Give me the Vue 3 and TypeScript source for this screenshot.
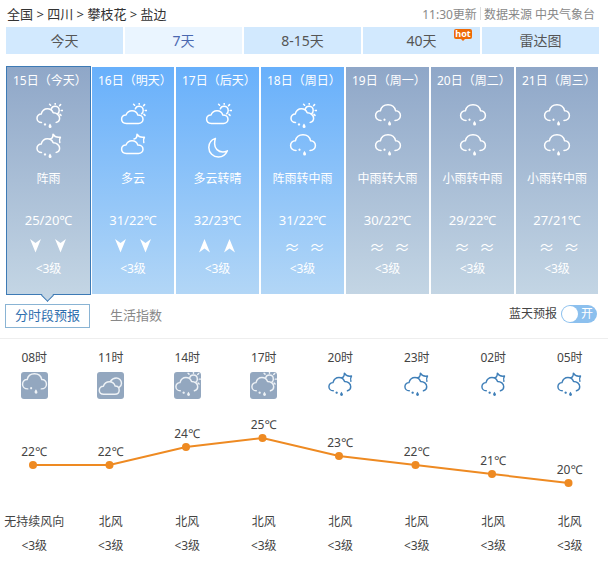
<script setup lang="ts">
import { computed } from 'vue'

type IconName = 'rain' | 'showerDay' | 'showerNight' | 'cloudDay' | 'cloudNight' | 'moon' | 'overcast'
type Wind = 'down' | 'up' | 'wave'

type DayItem = {
  date: string
  icons: [IconName, IconName]
  text: string
  temp: string
  wind: Wind
  rainy: boolean
}

type HourItem = {
  time: string
  icon: IconName
  boxed: boolean
  temp: number
  wind: string
}

const openCloud = 'M6.5 19.5C3.8 19.5 2 17.5 2 15.2C2 12.8 3.9 11 6.2 11C7.2 7.6 9.6 5.8 12.4 5.8C15 5.8 17.2 7.2 18.2 9.8C21.6 9.8 24.6 12 24.6 15.2C24.6 17.2 23.4 18.8 21.2 19.4'
const closedCloud = 'M7.4 20.4C4.4 20.4 2.6 18.4 2.6 16C2.6 13.6 4.6 11.8 7 12C8 9.4 10.2 7.8 13 7.8C15.8 7.8 18 9.4 18.8 12C21.6 12 24 13.8 24 16.2C24 18.6 22 20.4 19.4 20.4Z'
const sun = 'M16.4 5.8C16.8 4.2 18.4 3.2 20 3.2C22.4 3.2 24.2 5 24.2 7.4C24.2 8.8 23.6 10 22.6 10.8M20.2 1.2V0M24.6 2.6L25.6 1.6M26.2 7.4H27.8M25 11.4L26 12.4M15.6 2.2L14.6 1.2'
const moonHook = 'M15 6C17 5.8 18 4 18 1.2C19.2 3.4 21.6 4.8 25.4 4.2C24.4 5.6 24.2 7.4 24.8 9.6'
const drops = 'M10 20.2a1.2 1.2 0 1 0 .01 0ZM15 20.4C14.2 21.6 13.6 22.4 13.6 23.4a1.5 1.5 0 0 0 3 0C16.4 22.4 15.8 21.6 15 20.4Z'

const icons: Record<IconName, { line: string; fill: string }> = {
  rain: {
    line: 'M7 17.5C3.6 17.5 1.6 15.2 1.6 12.6C1.6 9.8 3.8 7.6 6.4 7.8C7.2 4.2 10.2 1.8 14 1.8C17.8 1.8 20.8 4.2 21.6 7.8C24.2 7.6 26.4 9.8 26.4 12.6C26.4 15.2 24.4 17.5 21 17.5',
    fill: 'M10.5 15.6a1.1 1.1 0 1 0 .01 0ZM15.5 18C14.7 19.2 14.1 20 14.1 21a1.5 1.5 0 0 0 3 0C16.9 20 16.3 19.2 15.5 18Z',
  },
  showerDay: { line: `${openCloud}${sun}`, fill: drops },
  showerNight: { line: `${openCloud}${moonHook}`, fill: drops },
  cloudDay: { line: `${closedCloud}${sun}`, fill: '' },
  cloudNight: { line: `${closedCloud}${moonHook}`, fill: '' },
  moon: { line: 'M11.4 5.4C7.4 6.8 4.8 10.4 4.8 14.4C4.8 19.8 9.2 24 14.4 24C18.4 24 21.8 21.6 23.4 17.8C21.8 18.6 20.4 19 18.8 19C14.2 19 10.6 15.4 10.6 10.8C10.6 8.8 10.8 7 11.4 5.4Z', fill: '' },
  overcast: {
    line: 'M7 23C4 23 2.4 21 2.4 18.8C2.4 16.4 4.4 14.6 6.6 14.8C7.6 12 10 10.2 12.8 10.2C15.8 10.2 18 12 18.8 14.6C21.2 14.6 23 16.4 23 18.8C23 21.2 21.2 23 18.6 23ZM14 9.6C15.4 7.4 17.6 6.2 20 6.2C23 6.2 25.4 8.6 25.4 11.6C25.4 13.4 24.6 15 23 16',
    fill: '',
  },
}

const days: DayItem[] = [
  { date: '15日（今天）', icons: ['showerDay', 'showerNight'], text: '阵雨', temp: '25/20℃', wind: 'down', rainy: true },
  { date: '16日（明天）', icons: ['cloudDay', 'cloudNight'], text: '多云', temp: '31/22℃', wind: 'down', rainy: false },
  { date: '17日（后天）', icons: ['cloudDay', 'moon'], text: '多云转晴', temp: '32/23℃', wind: 'up', rainy: false },
  { date: '18日（周日）', icons: ['showerDay', 'rain'], text: '阵雨转中雨', temp: '31/22℃', wind: 'wave', rainy: false },
  { date: '19日（周一）', icons: ['rain', 'rain'], text: '中雨转大雨', temp: '30/22℃', wind: 'wave', rainy: true },
  { date: '20日（周二）', icons: ['rain', 'rain'], text: '小雨转中雨', temp: '29/22℃', wind: 'wave', rainy: true },
  { date: '21日（周三）', icons: ['rain', 'rain'], text: '小雨转中雨', temp: '27/21℃', wind: 'wave', rainy: true },
]

const hours: HourItem[] = [
  { time: '08时', icon: 'rain', boxed: true, temp: 22, wind: '无持续风向' },
  { time: '11时', icon: 'overcast', boxed: true, temp: 22, wind: '北风' },
  { time: '14时', icon: 'showerDay', boxed: true, temp: 24, wind: '北风' },
  { time: '17时', icon: 'showerDay', boxed: true, temp: 25, wind: '北风' },
  { time: '20时', icon: 'showerNight', boxed: false, temp: 23, wind: '北风' },
  { time: '23时', icon: 'showerNight', boxed: false, temp: 22, wind: '北风' },
  { time: '02时', icon: 'showerNight', boxed: false, temp: 21, wind: '北风' },
  { time: '05时', icon: 'showerNight', boxed: false, temp: 20, wind: '北风' },
]

const tabs = ['今天', '7天', '8-15天', '40天', '雷达图']

const chartPoints = computed(() =>
  hours.map((h, i) => ({
    x: 33 + i * 76.5,
    y: 65 - (h.temp - 22) * 9,
    temp: h.temp,
  })),
)

const chartLine = computed(() => chartPoints.value.map(p => `${p.x},${p.y}`).join(' '))
</script>

<template>
  <div class="page">
    <div class="top">
      <div class="crumbs">全国 &gt; 四川 &gt; 攀枝花 &gt; 盐边</div>
      <div class="source">
        <span>11:30更新</span>
        <i class="source__line" />
        <span>数据来源 中央气象台</span>
      </div>
    </div>

    <div class="tabs">
      <div
        v-for="(tab, idx) in tabs"
        :key="tab"
        class="tab"
        :class="{ 'tab--active': idx === 1 }"
      >
        {{ tab }}
        <span v-if="tab === '40天'" class="tab__hot">hot</span>
      </div>
    </div>

    <div class="days">
      <div
        v-for="(day, idx) in days"
        :key="day.date"
        class="day"
        :class="{ 'day--rainy': day.rainy, 'day--selected': idx === 0 }"
      >
        <div class="day__date">{{ day.date }}</div>
        <svg
          v-for="(name, n) in day.icons"
          :key="n"
          class="day__icon"
          viewBox="0 0 28 28"
          width="28"
          height="28"
        >
          <path class="line" :d="icons[name].line" />
          <path class="fill" :d="icons[name].fill" />
        </svg>
        <div class="day__text">{{ day.text }}</div>
        <div class="day__temp">{{ day.temp }}</div>
        <div class="day__wind">
          <template v-for="n in 2" :key="n">
            <span v-if="day.wind === 'wave'" class="day__wave">≈</span>
            <svg v-else class="day__arrow" viewBox="0 0 11 14" width="11" height="14">
              <polygon v-if="day.wind === 'down'" points="0,0 5.5,4 11,0 5.5,13.5" />
              <polygon v-else points="0,13.5 5.5,9.5 11,13.5 5.5,0" />
            </svg>
          </template>
        </div>
        <div class="day__level">&lt;3级</div>
      </div>
    </div>

    <div class="bar">
      <div class="bar__btn">分时段预报</div>
      <div class="bar__link">生活指数</div>
      <div class="bar__sky">
        <span class="bar__label">蓝天预报</span>
        <span class="switch"><i class="switch__knob" />开</span>
      </div>
    </div>

    <div class="hours">
      <div v-for="h in hours" :key="h.time" class="hours__cell">{{ h.time }}</div>
    </div>
    <div class="hours hours--icons">
      <div v-for="h in hours" :key="h.time" class="hours__cell">
        <svg
          class="hour-icon"
          :class="{ 'hour-icon--boxed': h.boxed }"
          viewBox="0 0 28 28"
          width="27"
          height="27"
        >
          <path class="line" :d="icons[h.icon].line" />
          <path class="fill" :d="icons[h.icon].fill" />
        </svg>
      </div>
    </div>

    <svg class="chart" width="608" height="113" viewBox="0 0 608 113">
      <polyline :points="chartLine" fill="none" stroke="#ee8a22" stroke-width="2" />
      <g v-for="p in chartPoints" :key="p.x">
        <circle :cx="p.x" :cy="p.y" r="4" fill="#ee8a22" />
        <text :x="p.x + 1" :y="p.y - 9" text-anchor="middle">{{ p.temp }}℃</text>
      </g>
    </svg>

    <div class="hours">
      <div v-for="h in hours" :key="h.time" class="hours__cell">{{ h.wind }}</div>
    </div>
    <div class="hours hours--level">
      <div v-for="h in hours" :key="h.time" class="hours__cell">&lt;3级</div>
    </div>
  </div>
</template>

<style>
html,
body {
  margin: 0;
  background: #fff;
}
</style>

<style scoped>
.page {
  width: 608px;
  height: 570px;
  overflow: hidden;
  font-family: "Noto Sans", "Noto Sans CJK SC", sans-serif;
  color: #444;
}

.top {
  display: flex;
  align-items: center;
  justify-content: space-between;
  height: 27px;
  padding: 0 13px 0 7px;
  box-sizing: border-box;
}

.crumbs {
  font-size: 13px;
  color: #333;
}

.source {
  display: flex;
  align-items: center;
  font-size: 12px;
  color: #888;
}

.source__line {
  width: 1px;
  height: 13px;
  margin: 0 3px;
  background: #ddd;
}

.tabs {
  display: grid;
  grid-template-columns: repeat(5, 117px);
  gap: 2px;
  margin-left: 6px;
}

.tab {
  position: relative;
  height: 27px;
  line-height: 27px;
  text-align: center;
  font-size: 14px;
  color: #555;
  background: #d2e9fe;
}

.tab--active {
  color: #4a68b0;
  background: #eaf5ff;
}

.tab__hot {
  position: absolute;
  top: 2px;
  left: 91px;
  width: 18px;
  height: 10px;
  line-height: 10px;
  border-radius: 2px;
  background: #ee6a06;
  color: #fff;
  font-size: 9px;
  font-weight: 700;
}

.tab__hot::after {
  content: "";
  position: absolute;
  left: 7px;
  bottom: -2px;
  border-left: 2px solid transparent;
  border-right: 2px solid transparent;
  border-top: 2px solid #ee6a06;
}

.days {
  display: grid;
  grid-template-columns: 84px 82px 83px 83px 83px 83px 82px;
  gap: 2px;
  margin: 13px 0 0 6px;
}

.day {
  position: relative;
  height: 227px;
  padding: 5px 6px 0;
  box-sizing: border-box;
  color: #fff;
  text-align: center;
  background: linear-gradient(#68b0fb, #b2d6f6);
}

.day--rainy {
  background: linear-gradient(#8fa7c8, #c3d5e4);
}

.day--selected {
  height: 229px;
  margin: -1px -1px -1px 0;
  border: 1px solid #3d7ab5;
}

.day--selected::after {
  content: "";
  position: absolute;
  left: 36px;
  bottom: -6px;
  width: 9px;
  height: 9px;
  box-sizing: border-box;
  background: #c3d5e4;
  border-right: 1px solid #3d7ab5;
  border-bottom: 1px solid #3d7ab5;
  transform: rotate(45deg);
}

.day__date {
  height: 18px;
  line-height: 18px;
  font-size: 12px;
  text-align: left;
  white-space: nowrap;
}

.day__icon {
  display: block;
  margin: 0 auto 2px;
  color: #fff;
}

.day__date + .day__icon {
  margin-top: 13px;
}

.day__text {
  height: 18px;
  line-height: 18px;
  margin-top: 9px;
  font-size: 12px;
  white-space: nowrap;
  margin-left: -6px;
  margin-right: -6px;
}

.day__temp {
  height: 20px;
  line-height: 20px;
  margin-top: 22px;
  font-size: 13px;
  white-space: nowrap;
}

.day__wind {
  display: flex;
  align-items: center;
  justify-content: center;
  gap: 14px;
  height: 16px;
  margin-top: 8px;
  padding-right: 1px;
}

.day__arrow polygon {
  fill: #fff;
}

.day__wave {
  width: 11px;
  font-size: 16px;
  line-height: 16px;
  padding-top: 1px;
}

.day__level {
  height: 18px;
  line-height: 18px;
  margin-top: 6px;
  font-size: 12px;
}

.line {
  fill: none;
  stroke: currentColor;
  stroke-width: 1.5;
  stroke-linecap: round;
  stroke-linejoin: round;
}

.fill {
  fill: currentColor;
}

.bar {
  display: flex;
  align-items: flex-start;
  height: 34px;
  margin-top: 10px;
  padding: 0 11px 0 5px;
  border-bottom: 1px solid #eee;
}

.bar__btn {
  width: 85px;
  height: 24px;
  line-height: 21px;
  box-sizing: border-box;
  border: 1px solid #8ab4d4;
  text-align: center;
  font-size: 13px;
  color: #2f6fae;
}

.bar__link {
  margin-left: 20px;
  line-height: 22px;
  font-size: 13px;
  color: #888;
}

.bar__sky {
  display: flex;
  align-items: center;
  gap: 4px;
  margin-left: auto;
  height: 18px;
  margin-top: 1px;
  font-size: 12px;
  color: #444;
}

.bar__label {
  padding-bottom: 2px;
}

.switch {
  position: relative;
  width: 36px;
  height: 18px;
  line-height: 18px;
  border-radius: 9px;
  padding-left: 20px;
  box-sizing: border-box;
  background: #8cc0ee;
  color: #fff;
}

.switch__knob {
  position: absolute;
  top: 1px;
  left: 1px;
  width: 16px;
  height: 16px;
  border-radius: 50%;
  background: #fff;
}

.hours {
  display: grid;
  grid-template-columns: repeat(8, 76.5px);
  margin: 10px 0 0 -4px;
}

.hours--icons {
  margin-top: 5px;
}

.hours--level {
  margin-top: 6px;
}

.hours__cell {
  height: 18px;
  line-height: 18px;
  font-size: 12px;
  text-align: center;
  white-space: nowrap;
  color: #444;
}

.hours--icons .hours__cell {
  height: 27px;
}

.hour-icon {
  display: block;
  margin: 0 auto;
  color: #3f7fb8;
}

.hour-icon--boxed {
  color: #eef2f6;
  background: #93a7bf;
  border-radius: 3px;
}

.chart {
  display: block;
  margin-top: 1px;
}

.chart text {
  font-size: 12px;
  fill: #444;
}

.chart + .hours {
  margin-top: 0;
}
</style>
